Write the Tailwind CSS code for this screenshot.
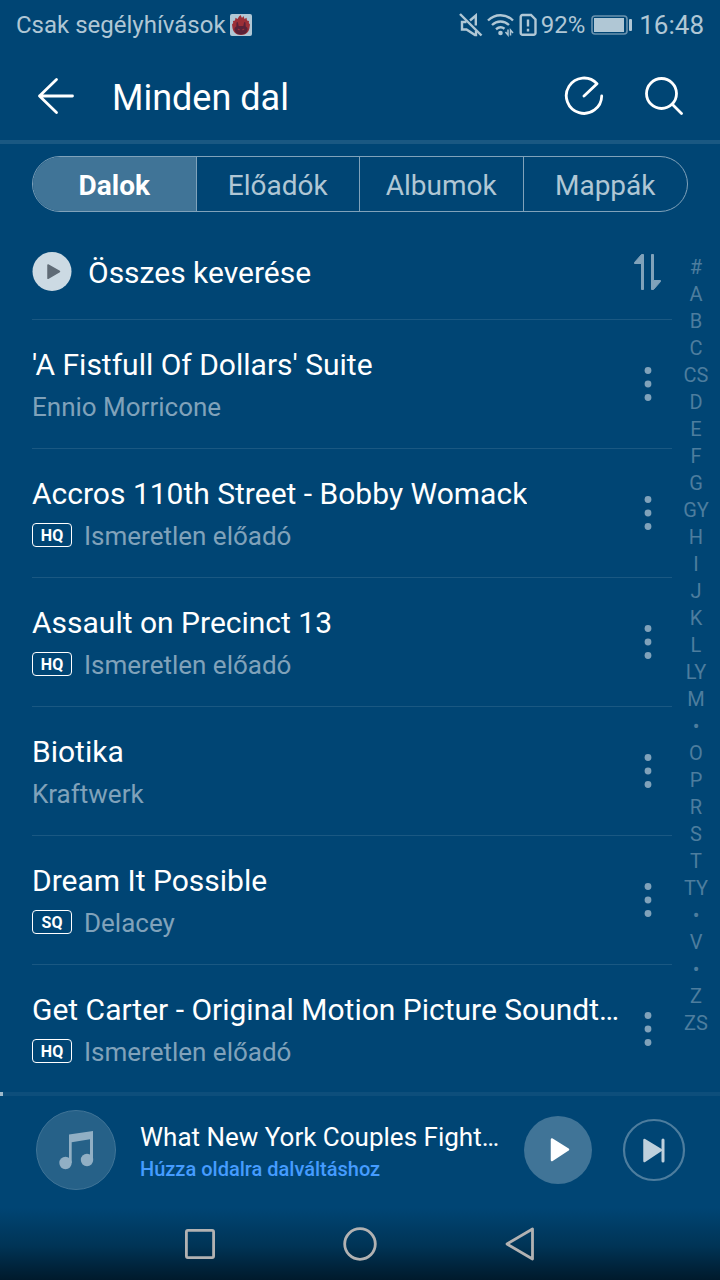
<!DOCTYPE html>
<html lang="hu">
<head>
<meta charset="utf-8">
<meta name="viewport" content="width=device-width, initial-scale=1">
<title>Minden dal</title>
<script src="https://cdn.jsdelivr.net/npm/@tailwindcss/browser@4"></script>
</head>
<body class="flex min-h-screen flex-col bg-[#004574] font-['Roboto','Noto_Sans',sans-serif] text-white">

<svg class="hidden" aria-hidden="true">
  <symbol id="dots" viewBox="0 0 8 36"><circle cx="4" cy="4.500" r="3.400"/><circle cx="4" cy="18" r="3.400"/><circle cx="4" cy="31.500" r="3.400"/></symbol>
</svg>

<!-- Status bar -->
<div class="flex h-[50px] items-center justify-between px-4 text-[#b0c7d5]">
  <div class="flex items-center gap-1 text-2xl leading-8">
    <span>Csak segélyhívások</span>
    <svg class="h-[22px] w-[22px]" viewBox="0 0 22 22" aria-hidden="true">
      <rect width="22" height="22" rx="2" fill="#b0c7d5"/>
      <path d="M10.500 1l1.500 3 1.500-2 1 3 2-1.200.5 2.700 2 .5-.2 2 1.200 1.500-.3 2C19.500 17.500 16 21 11 21s-8.500-3.500-8.700-8.500L2 10.500 3.200 9 3 7l2-.5.5-2.700 2 1.200L9 2.500z" fill="#9c2f37"/>
      <path d="M6.500 8.500l1.300-.5.9 4h4.600l.9-4 1.300.5.2 4c1.700.8 2.100 2 1.800 3.500-.8 3-3.200 4.500-6.500 4.500S5.300 19 4.500 16c-.3-1.500.1-2.700 1.800-3.500z" fill="#5a2238"/>
      <path d="M7.500 15c1-.4 2 0 2.500 1-1 .5-2 .2-2.500-1zm7 0c-1-.4-2 0-2.500 1 1 .5 2 .2 2.500-1z" fill="#9c2f37"/>
    </svg>
  </div>
  <div class="flex items-center">
    <svg class="h-6 w-6" viewBox="0 0 24 24" fill="none" stroke="currentColor" stroke-width="2.400" aria-hidden="true">
      <path d="M1 1l21.500 21.500"/><path d="M11 7.500L16.800 2.500v10M7.500 9H3v7.500h4.500l8.500 5.500h1v-4"/>
    </svg>
    <svg class="ml-1 h-6 w-7" viewBox="0 0 28 24" fill="none" stroke="currentColor" stroke-width="2.400" aria-hidden="true">
      <path d="M1 7.500c7-7 18-7 25 0M5 12c5-4.700 12-4.700 17 0M9 16.200c3-2.400 6-2.400 8.500-.4"/>
      <circle cx="13.500" cy="20" r="2.300" fill="currentColor" stroke="none"/>
      <path d="M21 16.500v5.500l-2.500-3M23.500 22.500V17l2.500 3" stroke-width="1.500"/>
    </svg>
    <svg class="ml-1 h-6 w-[18px]" viewBox="0 0 18 24" fill="none" stroke="currentColor" stroke-width="2.400" aria-hidden="true">
      <path d="M3.500 2h8.500l4.500 4.500V20a1.800 1.800 0 0 1-1.800 1.800H3.500A1.800 1.800 0 0 1 1.700 20V3.800A1.800 1.800 0 0 1 3.500 2z"/><path d="M9 6.500v7M9 15.800v2.600"/>
    </svg>
    <span class="ml-1 text-2xl leading-8">92%</span>
    <svg class="ml-1.5 h-5 w-[42px]" viewBox="0 0 42 20" aria-hidden="true">
      <rect x="1" y="1" width="35" height="18" rx="3" fill="none" stroke="currentColor" stroke-opacity=".6" stroke-width="1.600"/>
      <rect x="3" y="3" width="30" height="14" fill="currentColor"/><rect x="38" y="4" width="3" height="12" rx="1" fill="currentColor"/>
    </svg>
    <time class="ml-1.5 text-[26px] leading-8">16:48</time>
  </div>
</div>

<!-- Title bar -->
<header class="flex h-[94px] items-center border-b-4 border-[#1a5882] pr-9 pl-9">
  <button type="button" aria-label="Vissza">
    <svg class="h-10 w-10" viewBox="0 0 40 40" fill="none" stroke="currentColor" stroke-width="2.800" stroke-linecap="round" stroke-linejoin="round"><path d="M20.500 4.500L3.500 21l17 16.500M3.500 21H36.500"/></svg>
  </button>
  <h1 class="ml-9 flex-1 pt-1.5 text-4xl leading-10">Minden dal</h1>
  <button type="button" aria-label="Időzítő">
    <svg class="h-10 w-10" viewBox="0 0 40 40" fill="none" stroke="currentColor" stroke-width="2.800" stroke-linecap="round" stroke-linejoin="round"><path d="M20 21L33 8.700A17.700 17.700 0 1 0 37.700 21"/></svg>
  </button>
  <button type="button" class="ml-10" aria-label="Keresés">
    <svg class="h-10 w-10" viewBox="0 0 40 40" fill="none" stroke="currentColor" stroke-width="2.800" stroke-linecap="round"><circle cx="17.500" cy="18.500" r="15"/><path d="M28.500 29.500l9 9"/></svg>
  </button>
</header>

<!-- Category tabs -->
<nav class="mx-8 mt-3 grid h-14 grid-cols-4 divide-x divide-[#80a2ba] overflow-hidden rounded-full border border-[#80a2ba] text-[28px] leading-8 text-[#b0c7d5]">
  <button type="button" class="bg-[#407497] pt-1 font-bold text-white">Dalok</button>
  <button type="button" class="pt-1">Előadók</button>
  <button type="button" class="pt-1">Albumok</button>
  <button type="button" class="pt-1">Mappák</button>
</nav>

<div class="flex flex-1">
  <main class="min-w-0 flex-1 pt-3 pl-8">
    <div class="flex h-24 items-center justify-between border-b border-[#1a5882] pr-2">
      <button type="button" class="flex items-center gap-4 text-[30px] leading-10">
        <svg class="h-10 w-10" viewBox="0 0 40 40" aria-hidden="true"><circle cx="20" cy="19.500" r="19.500" fill="#ccdae3"/><path d="M16 13L27.500 19.500 16 26.300z" fill="#5f6b76" stroke="#5f6b76" stroke-width="1.500" stroke-linejoin="round"/></svg>
        <span class="pt-0.5">Összes keverése</span>
      </button>
      <button type="button" class="text-[#80a2ba]" aria-label="Rendezés">
        <svg class="h-10 w-8" viewBox="0 0 32 40" fill="currentColor" stroke="currentColor" stroke-width="1" stroke-linejoin="round"><path d="M9.500 2.500h2v35h-2V11.500H2.500v-1zM21.500 37.500h-2V2.500h2V28.500h7v1z"/></svg>
      </button>
    </div>
    <ul>
      <li class="flex h-[129px] items-start justify-between border-b border-[#1a5882] pt-[25px]">
        <div class="flex min-w-0 flex-col gap-1">
          <p class="truncate text-[30px] leading-10">'A Fistfull Of Dollars' Suite</p>
          <p class="text-[26px] leading-9 text-[#80a2ba]">Ennio Morricone</p>
        </div>
        <button type="button" class="mt-[21px] ml-4 shrink-0 px-5 text-[#80a2ba]" aria-label="Továbbiak"><svg class="h-9 w-2" fill="currentColor"><use href="#dots"/></svg></button>
      </li>
      <li class="flex h-[129px] items-start justify-between border-b border-[#1a5882] pt-[25px]">
        <div class="flex min-w-0 flex-col gap-1">
          <p class="truncate text-[30px] leading-10">Accros 110th Street - Bobby Womack</p>
          <p class="flex items-center gap-3 text-[26px] leading-9 text-[#80a2ba]"><span class="mb-0.5 h-6 w-10 rounded-sm border border-white text-center text-base leading-6 font-bold text-white">HQ</span>Ismeretlen előadó</p>
        </div>
        <button type="button" class="mt-[21px] ml-4 shrink-0 px-5 text-[#80a2ba]" aria-label="Továbbiak"><svg class="h-9 w-2" fill="currentColor"><use href="#dots"/></svg></button>
      </li>
      <li class="flex h-[129px] items-start justify-between border-b border-[#1a5882] pt-[25px]">
        <div class="flex min-w-0 flex-col gap-1">
          <p class="truncate text-[30px] leading-10">Assault on Precinct 13</p>
          <p class="flex items-center gap-3 text-[26px] leading-9 text-[#80a2ba]"><span class="mb-0.5 h-6 w-10 rounded-sm border border-white text-center text-base leading-6 font-bold text-white">HQ</span>Ismeretlen előadó</p>
        </div>
        <button type="button" class="mt-[21px] ml-4 shrink-0 px-5 text-[#80a2ba]" aria-label="Továbbiak"><svg class="h-9 w-2" fill="currentColor"><use href="#dots"/></svg></button>
      </li>
      <li class="flex h-[129px] items-start justify-between border-b border-[#1a5882] pt-[25px]">
        <div class="flex min-w-0 flex-col gap-1">
          <p class="truncate text-[30px] leading-10">Biotika</p>
          <p class="text-[26px] leading-9 text-[#80a2ba]">Kraftwerk</p>
        </div>
        <button type="button" class="mt-[21px] ml-4 shrink-0 px-5 text-[#80a2ba]" aria-label="Továbbiak"><svg class="h-9 w-2" fill="currentColor"><use href="#dots"/></svg></button>
      </li>
      <li class="flex h-[129px] items-start justify-between border-b border-[#1a5882] pt-[25px]">
        <div class="flex min-w-0 flex-col gap-1">
          <p class="truncate text-[30px] leading-10">Dream It Possible</p>
          <p class="flex items-center gap-3 text-[26px] leading-9 text-[#80a2ba]"><span class="mb-0.5 h-6 w-10 rounded-sm border border-white text-center text-base leading-6 font-bold text-white">SQ</span>Delacey</p>
        </div>
        <button type="button" class="mt-[21px] ml-4 shrink-0 px-5 text-[#80a2ba]" aria-label="Továbbiak"><svg class="h-9 w-2" fill="currentColor"><use href="#dots"/></svg></button>
      </li>
      <li class="flex h-[127px] items-start justify-between pt-[25px]">
        <div class="flex min-w-0 flex-col gap-1">
          <p class="truncate text-[30px] leading-10">Get Carter - Original Motion Picture Soundt…</p>
          <p class="flex items-center gap-3 text-[26px] leading-9 text-[#80a2ba]"><span class="mb-0.5 h-6 w-10 rounded-sm border border-white text-center text-base leading-6 font-bold text-white">HQ</span>Ismeretlen előadó</p>
        </div>
        <button type="button" class="mt-[21px] -ml-2 shrink-0 px-5 text-[#80a2ba]" aria-label="Továbbiak"><svg class="h-9 w-2" fill="currentColor"><use href="#dots"/></svg></button>
      </li>
    </ul>
  </main>

  <!-- Alphabet index -->
  <ol class="w-12 shrink-0 pt-[42px] text-center text-xl leading-[27px] text-[#4d7d9e]">
    <li>#</li><li>A</li><li>B</li><li>C</li><li>CS</li><li>D</li><li>E</li><li>F</li><li>G</li><li>GY</li><li>H</li><li>I</li><li>J</li><li>K</li><li>L</li><li>LY</li><li>M</li><li>•</li><li>O</li><li>P</li><li>R</li><li>S</li><li>T</li><li>TY</li><li>•</li><li>V</li><li>•</li><li>Z</li><li>ZS</li>
  </ol>
</div>

<!-- Mini player -->
<section aria-label="Lejátszó">
  <div class="h-1 bg-[#0d4e7b]"><div class="h-1 w-[3px] bg-[#9fb9ca]"></div></div>
  <div class="flex h-[108px] items-center pr-[34px] pl-9">
    <svg class="h-20 w-20 shrink-0" viewBox="0 0 80 80" aria-hidden="true">
      <circle cx="40" cy="40" r="39.500" fill="#266188" stroke="#407497"/>
      <g fill="#91afc4"><circle cx="29.500" cy="53" r="6.200"/><circle cx="51" cy="50" r="6.200"/><path d="M33 24.500L57 21v29h-3V29.200l-18.300 3V53H33z"/></g>
    </svg>
    <div class="ml-6 min-w-0 flex-1 pt-1.5">
      <p class="truncate text-[26px] leading-8">What New York Couples Fight…</p>
      <p class="text-xl leading-8 font-medium text-[#459cff]">Húzza oldalra dalváltáshoz</p>
    </div>
    <button type="button" class="ml-6 shrink-0" aria-label="Lejátszás">
      <svg class="h-[68px] w-[68px]" viewBox="0 0 68 68"><circle cx="34" cy="34" r="34" fill="#407497"/><path d="M28 23.500L44 33.500 28 44z" fill="#fff" stroke="#fff" stroke-width="2.500" stroke-linejoin="round"/></svg>
    </button>
    <button type="button" class="ml-[30px] shrink-0" aria-label="Következő">
      <svg class="h-16 w-16" viewBox="0 0 64 64"><circle cx="32" cy="32" r="30" fill="none" stroke="#4d7d9e" stroke-width="2.200"/><path d="M22.500 22L39 32 22.500 43z" fill="#bfd0dc" stroke="#bfd0dc" stroke-width="2.500" stroke-linejoin="round"/><path d="M41 22v21" stroke="#bfd0dc" stroke-width="3" stroke-linecap="round"/></svg>
    </button>
  </div>
</section>

<!-- System navigation -->
<nav class="flex h-[76px] items-center justify-center gap-[120px] bg-linear-to-b from-[#004574] from-5% via-[#003456] via-55% to-[#001a2c] pt-1 text-[#b2b2b2]">
  <button type="button" aria-label="Legutóbbi"><svg class="h-10 w-10" viewBox="0 0 40 40" fill="none" stroke="currentColor" stroke-width="2.800"><rect x="6.400" y="6.400" width="27.200" height="27.200" rx="1.500"/></svg></button>
  <button type="button" aria-label="Kezdőlap"><svg class="h-10 w-10" viewBox="0 0 40 40" fill="none" stroke="currentColor" stroke-width="2.800"><circle cx="20" cy="20" r="15.300"/></svg></button>
  <button type="button" aria-label="Vissza"><svg class="h-10 w-10" viewBox="0 0 40 40" fill="none" stroke="currentColor" stroke-width="2.800" stroke-linejoin="round"><path d="M32.500 5v30L7 20z"/></svg></button>
</nav>
</body>
</html>
